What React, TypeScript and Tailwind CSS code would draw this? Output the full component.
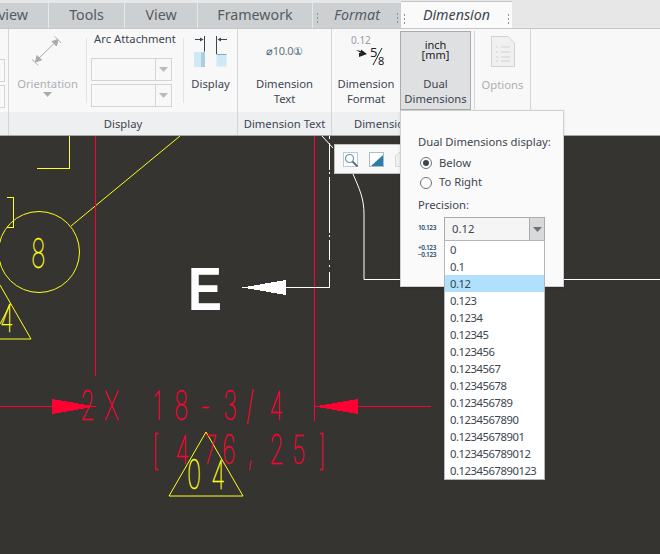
const TABS = [
  { label: 'Review', w: 'w-[49px] justify-end pr-[20px]' },
  { label: 'Tools', w: 'w-[76px] justify-center' },
  { label: 'View', w: 'w-[73px] justify-center' },
  { label: 'Framework', w: 'w-[115px] justify-center' },
];

const PRECISIONS = [
  '0',
  '0.1',
  '0.12',
  '0.123',
  '0.1234',
  '0.12345',
  '0.123456',
  '0.1234567',
  '0.12345678',
  '0.123456789',
  '0.1234567890',
  '0.12345678901',
  '0.123456789012',
  '0.1234567890123',
];

const SELECTED = '0.12';
const RED = '#ff0033';
const YELLOW = '#ffff1a';

// one glyph of the drawing font: tall, narrow and thin
function CadText({ chars, y, fill, size = 40 }: { chars: [string, number][]; y: number; fill: string; size?: number }) {
  return (
    <g fill={fill} stroke={fill} strokeWidth={0.5} fontFamily="Inter, sans-serif" fontWeight={100} fontSize={size}>
      {chars.map(([c, x], i) => (
        <text key={i} transform={`translate(${x} ${y}) scale(0.6 1)`}>
          {c}
        </text>
      ))}
    </g>
  );
}

function Drawing() {
  return (
    <svg viewBox="0 136 660 418" className="block w-[660px] h-[418px]" fill="none" shapeRendering="crispEdges">
      {/* yellow geometry */}
      <g stroke={YELLOW} strokeWidth={1}>
        <path d="M69.5 136V168.5H37" />
        <path d="M180 136L71 226" shapeRendering="auto" />
        <circle cx={39} cy={252} r={40.5} shapeRendering="auto" />
        <path d="M7 197.5H13.5V227.5H7" />
        <path d="M0 285L31 339H0M10.5 304L0 324" shapeRendering="auto" />
        <path d="M206 432L243 496H169Z" shapeRendering="auto" />
      </g>
      <CadText chars={[['8', 31]]} y={268} fill={YELLOW} size={41} />
      <CadText chars={[['4', 0]]} y={332} fill={YELLOW} size={38} />
      <CadText chars={[['0', 187], ['4', 211]]} y={489} fill={YELLOW} />

      {/* red dimension lines */}
      <g stroke={RED} strokeWidth={1}>
        <path d="M95.5 136V376" />
        <path d="M314.5 136V421" />
        <path d="M0 406.5H52M358 406.5H431" />
      </g>
      <path d="M96 406.5L52 399V414ZM314 406.5L358 399V414Z" fill={RED} />
      <CadText
        chars={[['2', 80], ['X', 104], ['1', 153], ['8', 174], ['-', 200], ['3', 223], ['/', 246], ['4', 269]]}
        y={420}
        fill={RED}
      />
      <CadText
        chars={[['[', 152], ['4', 175], ['7', 204], ['6', 222], [',', 247], ['2', 269], ['5', 292], [']', 318]]}
        y={464}
        fill={RED}
      />

      {/* white detail */}
      <g stroke="#ffffff" strokeWidth={1}>
        <path d="M329.5 136V139M329.5 143V170M329.5 172V174M329.5 177V233M329.5 235V237M329.5 240V260M329.5 265V267M329.5 272V287.5H286" />
        <path d="M322 136L333 148" shapeRendering="auto" />
        <path d="M353 174C359 188 364 198 364 214V279.5H400" shapeRendering="auto" />
        <path d="M563 279.5H660" />
      </g>
      <path d="M242 287.5L286 280V295Z" fill="#ffffff" />
      <text
        transform="translate(188 310) scale(0.82 1)"
        fill="#ffffff"
        fontFamily="Liberation Sans, sans-serif"
        fontWeight={700}
        fontSize={62}
      >
        E
      </text>
    </svg>
  );
}

function Grip({ className }: { className: string }) {
  return (
    <span className={`absolute top-[10px] flex flex-col gap-[2px] ${className}`}>
      <span className="w-px h-[2px] bg-[#8f9296]" />
      <span className="w-px h-[2px] bg-[#8f9296]" />
      <span className="w-px h-[2px] bg-[#8f9296]" />
    </span>
  );
}

function Caret({ color = '#b9bbbd' }: { color?: string }) {
  return (
    <svg width="9" height="5" viewBox="0 0 9 5">
      <path d="M0 0H9L4.5 5Z" fill={color} />
    </svg>
  );
}

function DisabledCombo() {
  return (
    <div className="flex w-[81px] h-[23px] border border-[#d4d4d4]">
      <div className="flex-1 border-r border-[#d4d4d4]" />
      <div className="flex items-center justify-center w-[15px]">
        <Caret />
      </div>
    </div>
  );
}

function RibbonButton({ lines, disabled }: { lines: string[]; disabled?: boolean }) {
  return (
    <div className={`text-center leading-[15px] ${disabled ? 'text-[#aeb0b2]' : 'text-[#3c4650]'}`}>
      {lines.map((l) => (
        <div key={l}>{l}</div>
      ))}
    </div>
  );
}

export default function App() {
  return (
    <div className="relative w-[660px] h-[554px] overflow-hidden bg-[#353430] font-['Noto_Sans','Open_Sans',sans-serif] text-[11.25px] text-[#3c4650]">
      {/* tab strip */}
      <div className="flex h-[29px] bg-[#e7e7e7] border-b border-[#c4c6c8] pt-[3px] text-[14.25px] text-[#565b60]">
        {TABS.map((t) => (
          <div
            key={t.label}
            className={`flex items-center overflow-hidden ${t.w} h-[25px] pb-[2px] bg-[#cdd0d3] border-r border-[#e7e8e9]`}
          >
            {t.label}
          </div>
        ))}
        <div className="relative flex items-center justify-center w-[88px] h-[25px] pb-[2px] bg-[#cdd0d3] italic">
          <Grip className="left-[4px]" />
          Format
          <Grip className="right-[3px]" />
        </div>
        <div className="relative flex items-center justify-center w-[111px] h-[27px] -mt-[2px] pb-[1px] bg-[#fafafa] border-t border-[#c4c6c8] italic text-[#3c4650]">
          <Grip className="left-[3px] top-[12px]" />
          Dimension
          <Grip className="right-[3px] top-[12px]" />
        </div>
      </div>

      {/* ribbon */}
      <div className="flex h-[107px] bg-[#f8f8f9] border-b border-[#a5a7a9]">
        {/* cut off group */}
        <div className="flex flex-col w-[9px] border-r border-[#d2d4d6]">
          <div className="flex-1 flex flex-col gap-[3px] pt-[30px]">
            <div className="w-[5px] h-[23px] border border-l-0 border-[#d4d4d4]" />
            <div className="w-[5px] h-[23px] border border-l-0 border-[#d4d4d4]" />
          </div>
          <div className="h-[23px] bg-[#eeeff1]" />
        </div>

        {/* display group */}
        <div className="flex flex-col w-[229px] border-r border-[#d2d4d6]">
          <div className="flex flex-1">
            <div className="flex flex-col items-center w-[77px] pt-[6px]">
              <svg width="32" height="32" viewBox="0 0 32 32" fill="none" stroke="#a9abad">
                <path d="M-.8 23.7L6.2 30.3M22.5 1.3L29.2 8M4 26L25 5.5" />
                <path d="M3.5 27L5 20.5L9.5 25ZM26 4.5L24.5 11L20 6.5Z" fill="#a9abad" />
              </svg>
              <div className="mt-[9px]">
                <RibbonButton lines={['Orientation']} disabled />
              </div>
              <div className="mt-[1px] leading-none">
                <Caret color="#a9abad" />
              </div>
            </div>
            <div className="w-px h-[65px] mt-[9px] bg-[#e2e3e4]" />
            <div className="flex flex-col items-center w-[96px] pt-[2px]">
              <div className="leading-[16px] mb-[11px]">Arc Attachment</div>
              <div className="flex flex-col gap-[3px] pr-[8px]">
                <DisabledCombo />
                <DisabledCombo />
              </div>
            </div>
            <div className="w-px h-[65px] mt-[9px] bg-[#e2e3e4]" />
            <div className="flex flex-col items-center flex-1 pt-[7px]">
              <svg width="34" height="31" viewBox="0 0 34 31" fill="none">
                <path d="M10.5 0V16M1 3.5H8M22.5 0V18M25 3.5H33" stroke="#3c4650" />
                <path d="M9.5 3.5L6 1.5V5.5ZM23.5 3.5L27 1.5V5.5Z" fill="#3c4650" />
                <path d="M0 16H11V31H0Z" fill="#cfe9f5" />
                <path d="M7 17L11 15V31H7Z" fill="#a9cfe0" />
                <path d="M22.5 18.5H32.5V30.5H22.5Z" fill="#cfe9f5" />
                <path d="M22.5 18.5H32.5" stroke="#7fa8c0" />
              </svg>
              <div className="mt-[9px]">
                <RibbonButton lines={['Display']} />
              </div>
            </div>
          </div>
          <div className="flex items-center justify-center h-[23px] pt-[1px] bg-[#eeeff1]">Display</div>
        </div>

        {/* dimension text group */}
        <div className="flex flex-col w-[94px] border-r border-[#d2d4d6]">
          <div className="flex flex-col items-center flex-1 pt-[14px]">
            <div className="h-[24px] leading-[16px] text-[11px] tracking-[-0.3px] text-[#6a7278]">
              <span className="text-[#1f5a78]">⌀</span>10.0<span className="text-[#1f5a78]">①</span>
            </div>
            <div className="mt-[9px]">
              <RibbonButton lines={['Dimension', 'Text']} />
            </div>
          </div>
          <div className="flex items-center justify-center h-[23px] pt-[1px] bg-[#eeeff1]">Dimension Text</div>
        </div>

        {/* dimension group */}
        <div className="flex flex-col w-[199px] border-r border-[#d2d4d6]">
          <div className="flex flex-1">
            <div className="flex flex-col items-center w-[68px] pt-[5px]">
              <div className="relative w-[40px] h-[33px]">
                <span className="absolute left-[5px] top-0 text-[10px] leading-[12px] text-[#9a9da0]">0.12</span>
                <span className="absolute left-[24px] top-[11px] text-[13px] leading-[15px] text-[#222]">5</span>
                <span className="absolute left-[32px] top-[21px] text-[11px] leading-[12px] text-[#222]">8</span>
                <svg width="40" height="33" viewBox="0 0 40 33" className="absolute left-0 top-0" fill="none">
                  <path d="M27 31L36 14" stroke="#222" />
                  <path d="M10 16L15 19H13V23L21 20L15 15.5V17Z" fill="#222" />
                </svg>
              </div>
              <div className="mt-[9px]">
                <RibbonButton lines={['Dimension', 'Format']} />
              </div>
            </div>
            <div className="flex flex-col items-center w-[71px] h-[79px] mt-[2px] bg-[#dfe0e2] border border-[#a9abad] pt-[8px]">
              <div className="text-center text-[11px] leading-[10px] text-[#222] h-[28px]">
                inch
                <br />
                [mm]
              </div>
              <div className="mt-[8px]">
                <RibbonButton lines={['Dual', 'Dimensions']} />
              </div>
            </div>
            <div className="w-px h-[78px] mt-[2px] ml-[3px] bg-[#d2d4d6]" />
            <div className="flex flex-col items-center flex-1 pt-[7px]">
              <svg width="24" height="31" viewBox="0 0 24 31" fill="none" stroke="#d0d2d4">
                <path d="M.5.5H17L23.5 7V30.5H.5Z" fill="#f0f0f1" />
                <path d="M5 11H7M10 11H19M5 16H7M10 16H19M5 21H7M10 21H19M5 25H7M10 25H19" />
              </svg>
              <div className="mt-[10px]">
                <RibbonButton lines={['Options']} disabled />
              </div>
            </div>
          </div>
          <div className="flex items-center pl-[22px] h-[23px] pt-[1px] bg-[#eeeff1]">Dimensions</div>
        </div>
      </div>

      {/* canvas */}
      <Drawing />

      {/* floating mini toolbar */}
      <div className="absolute left-[334px] top-[144px] flex items-center gap-[11px] w-[80px] h-[30px] pl-[8px] pt-[1px] bg-[#f8f8f8] border border-[#c0c0c0]">
        <svg width="15" height="15" viewBox="0 0 15 15" fill="none" className="shrink-0">
          <rect x=".5" y=".5" width="14" height="14" fill="#fff" stroke="#b9cbd6" />
          <circle cx="6.5" cy="6.5" r="4" stroke="#6f93a8" strokeWidth="1.2" />
          <path d="M9.5 9.5L14.5 14.5" stroke="#5a6670" strokeWidth="1.8" />
        </svg>
        <svg width="15" height="15" viewBox="0 0 15 15" className="shrink-0">
          <rect x=".5" y=".5" width="14" height="14" fill="#fff" stroke="#a9bcc8" />
          <path d="M2 14L14 3V14Z" fill="#2a7da8" />
        </svg>
        <svg width="15" height="15" viewBox="0 0 15 15" className="shrink-0">
          <path d="M.5 14.5V4L4 .5H14.5V14.5Z" fill="#f0f0f0" stroke="#d8d8d8" />
        </svg>
      </div>

      {/* dual dimensions popover */}
      <div className="absolute left-[400px] top-[110px] w-[164px] h-[177px] bg-[#fafafa] border border-[#cfcfcf] shadow-sm pl-[17px] pt-[22px]">
        <div className="leading-[18px]">Dual Dimensions display:</div>
        <div className="flex items-center gap-[7px] h-[20px] pl-[2px] mt-[2px]">
          <span className="flex items-center justify-center w-[12px] h-[12px] rounded-full border border-[#6f7275] bg-white">
            <span className="w-[6px] h-[6px] rounded-full bg-[#3c4650]" />
          </span>
          <span className="mt-[1px]">Below</span>
        </div>
        <div className="flex items-center gap-[7px] h-[19px] pl-[2px]">
          <span className="w-[12px] h-[12px] rounded-full border border-[#6f7275] bg-white" />
          To Right
        </div>
        <div className="leading-[18px] mt-[4px]">Precision:</div>
        <div className="flex mt-[3px]">
          <div className="w-[26px] pt-[7px] text-[6.5px] font-semibold tracking-[-0.4px] leading-[7px] text-[#1f4f6a]">
            10.123
            <div className="mt-[13px]">+0.123</div>
            <div>−0.123</div>
          </div>
          <div className="flex w-[101px] h-[24px] bg-[#f5f5f5] border border-[#a9abad] border-b-0">
            <div className="flex-1 pl-[7px] leading-[21px]">{SELECTED}</div>
            <div className="flex items-center justify-center w-[15px] bg-[#d8d9da] border-l border-[#a9abad]">
              <Caret color="#6f7275" />
            </div>
          </div>
        </div>
      </div>

      {/* open precision list */}
      <div className="absolute left-[444px] top-[240px] w-[101px] h-[240px] bg-white border border-[#b4b6b8] z-10 tracking-[-0.45px]">
        {PRECISIONS.map((p) => (
          <div key={p} className={`h-[17px] pl-[5px] leading-[17px] ${p === SELECTED ? 'bg-[#b0e0fc]' : ''}`}>
            {p}
          </div>
        ))}
      </div>
    </div>
  );
}
